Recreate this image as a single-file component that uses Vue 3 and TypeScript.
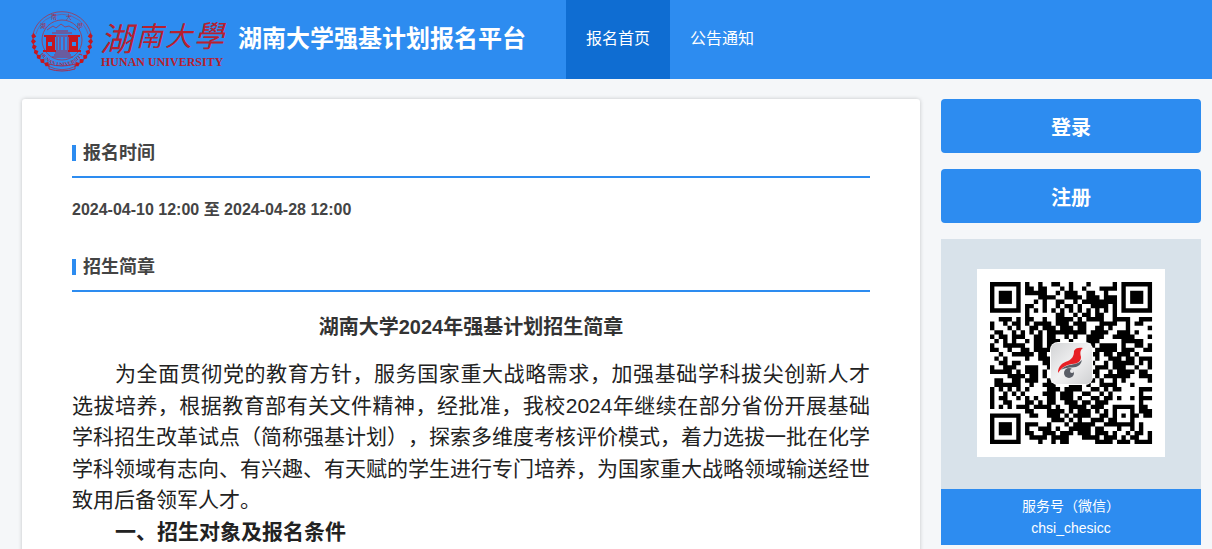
<script setup lang="ts">
interface NavItem {
  label: string
  active: boolean
}

const navItems: NavItem[] = [
  { label: '报名首页', active: true },
  { label: '公告通知', active: false },
]

// Dark modules of the code, one entry per row, as column numbers and ranges.
const qrRows: string[] = [
  '8 11 14-15 18 22 28',
  '8-9 11-12 16 18 21 25-28',
  '8-12 15 17-19 22-23 26',
  '11-14 17-20 22-24 26-28',
  '10 12 15-16 19 21-28',
  '8-9 12 15 17-18 20 23-26 28',
  '8 10 12 14 16 18 20 22 24 26 28',
  '8 15-16 19 21-22 24-25 28',
  '2-4 6 8-9 12 15-18 20 22-25 28-31 34-36',
  '0 3 5-6 8 10-13 15-17 19-21 25-28 31 33-34',
  '0 4 6 9-10 12-14 16-18 20-21 24-25 27 31 36',
  '1-2 5 7 9 11 13-21 23-26 29-31 33',
  '0 2-3 5-7 10-11 13-14 17 19 22-25 28-32 36',
  '1 3 5 8 10-11 13-15 18 22-24 30-34',
  '0 3-7 10-11 13-14 23 25-28 30 33-34 36',
  '0-1 4 7-8 10-13 24-28 30-32 35-36',
  '2 5-9 11-12 23-24 26-27 29-31 33',
  '1 3 8 11-13 24 27-29 31-32 34-36',
  '2-3 5-6 12-13 23 26 28-32 34 36',
  '0 3-5 8-10 13 24-26 28-30 33 36',
  '0-4 6 8-10 12 23-24 27 29-32 34-35',
  '4-7 9-10 12 24 26-31 34-36',
  '1-2 5-6 8-10 13 23 25 28 30 36',
  '1-6 9 12-14 18-20 22 25-28 32',
  '0 2 4 6 8 13-15 17-20 23-24 26 28-29 34-36',
  '0 3 5 7 12-14 16-18 21-22 25 27 34',
  '0 2-3 6 8 10 13-14 16-18 20 23-24 26-27 29 32 34-36',
  '0 3-4 8-9 11 13-14 17-19 21-22 24-26 34',
  '0 2 4 6-8 10-13 15 18-21 23-25 28-32 34-35',
  '8-9 13-16 18 20-22 24 26 28 32 34-36',
  '9-10 13-15 17 19-22 25-26 28 30 32-33 35-36',
  '14-16 18 20 23-25 27-28 32',
  '8-10 13 17 19-23 26-32 34',
  '8 11-13 15 18-22 24-25 29 32 34',
  '8-9 12-14 16-18 20-22 24-26 28 31 33-34 36',
  '9-12 14-17 21-24 26-28 30 32-33 36',
  '11 14 16-17 24-27 29-31 33-36',
]

const finders = [
  { x: 0, y: 0 },
  { x: 30, y: 0 },
  { x: 0, y: 30 },
]

const qrPath: string = qrRows
  .map((row, y) =>
    row
      .split(' ')
      .map((part) => {
        const [from, to = from] = part.split('-').map(Number)
        const length = to - from + 1
        return `M${from} ${y}h${length}v1h-${length}z`
      })
      .join(''),
  )
  .join('')

const leafAngles = [98, 87, 76, 65, 54, 43, 32]
</script>

<template>
  <div class="page">
    <header class="header">
      <a class="brand" href="#" aria-label="湖南大学">
        <svg class="logo" viewBox="0 0 196 64" width="196" height="64" aria-hidden="true">
          <g fill="none" stroke="#8d4770">
            <path d="M2 26a30 30 0 0 1 58 0" />
            <path d="M5 26a27 27 0 0 1 52 0" stroke-width="0.6" />
            <path d="M17 58a30 30 0 0 0 28 0" />
            <circle cx="31" cy="32" r="20" />
            <path d="M16 22l6-4 3 2 5-4 4 3 4-1 7 4" />
            <path d="M21 25h20M23 28h16M25 23h12" stroke="#a72c4e" />
            <path d="M26 29v13M29 29v13M33 29v13M37 29v13" stroke="#a72c4e" />
            <path d="M25 43h13M24 45h15M23 47h17M21 49h21" stroke="#a72c4e" />
          </g>
          <g fill="#c5161f">
            <path d="M15 28h9v15h-9zM38 28h9v15h-9z" />
            <path d="M13 27h12v2H13zM37 27h12v2H37zM12 42h13v2H12zM37 42h13v2H37z" />
            <g v-for="angle in leafAngles" :key="angle">
              <path d="M31 58l3 3-3 2-3-2z" :transform="`rotate(${-angle} 31 32)`" />
              <path d="M31 58l3 3-3 2-3-2z" :transform="`rotate(${angle} 31 32)`" />
            </g>
          </g>
          <path d="M17 34h4v4h-4zM41 34h4v4h-4z" fill="#2d8cf0" />
          <path d="M18 56q13 4 26 0v5q-13 4-26 0z" fill="none" stroke="#a72c4e" />
          <path id="seal-bottom" d="M6 33a25 25 0 0 0 50 0" fill="none" />
          <text class="seal-cn" x="9" y="20">湖</text>
          <text class="seal-cn" x="20" y="11">南</text>
          <text class="seal-cn" x="35" y="11">大</text>
          <text class="seal-cn" x="46" y="20">學</text>
          <text class="seal-en"><textPath href="#seal-bottom" startOffset="50%">HUNAN UNIVERSITY</textPath></text>
          <g class="script">
            <text x="69" y="43" font-size="33">湖</text>
            <text x="105" y="38" font-size="27">南</text>
            <text x="134" y="38" font-size="27">大</text>
            <text x="163" y="39" font-size="30">學</text>
          </g>
          <text class="logo-en" x="70" y="58">HUNAN UNIVERSITY</text>
        </svg>
      </a>
      <h1 class="site-title">湖南大学强基计划报名平台</h1>
      <nav class="nav">
        <a
          v-for="item in navItems"
          :key="item.label"
          href="#"
          class="nav-link"
          :class="{ active: item.active }"
        >{{ item.label }}</a>
      </nav>
    </header>

    <div class="content">
      <main class="card">
        <section>
          <h2 class="section-title">报名时间</h2>
          <p class="period">2024-04-10 12:00 至 2024-04-28 12:00</p>
        </section>
        <section>
          <h2 class="section-title">招生简章</h2>
          <article class="article">
            <h3 class="article-title">湖南大学2024年强基计划招生简章</h3>
            <p class="paragraph">为全面贯彻党的教育方针，服务国家重大战略需求，加强基础学科拔尖创新人才选拔培养，根据教育部有关文件精神，经批准，我校2024年继续在部分省份开展基础学科招生改革试点（简称强基计划），探索多维度考核评价模式，着力选拔一批在化学学科领域有志向、有兴趣、有天赋的学生进行专门培养，为国家重大战略领域输送经世致用后备领军人才。</p>
            <h4 class="paragraph">一、招生对象及报名条件</h4>
          </article>
        </section>
      </main>

      <aside class="sidebar">
        <button type="button" class="action">登录</button>
        <button type="button" class="action">注册</button>
        <figure class="wechat">
          <div class="qr-area">
            <svg class="qr" viewBox="0 0 188 188" width="188" height="188" role="img" aria-label="二维码">
              <defs>
                <linearGradient id="badge" x1="0" y1="0" x2="1" y2="1">
                  <stop offset="0" stop-color="#d2d3d5" />
                  <stop offset="0.5" stop-color="#f1f1f2" />
                  <stop offset="1" stop-color="#cfd0d2" />
                </linearGradient>
              </defs>
              <rect width="188" height="188" fill="#fff" />
              <g transform="translate(13 13) scale(4.38)">
                <path :d="qrPath" fill="#000" />
                <g v-for="(finder, index) in finders" :key="index" :transform="`translate(${finder.x} ${finder.y})`">
                  <path d="M0 0h7v7H0zM1 1v5h5V1z" fill="#000" fill-rule="evenodd" />
                  <rect x="2" y="2" width="3" height="3" fill="#000" />
                </g>
              </g>
              <rect x="73" y="73" width="43" height="43" rx="8" fill="#fff" />
              <rect x="74" y="74" width="41" height="41" rx="6" fill="url(#badge)" />
              <path d="M106 79c-4-1-8 0-9 3 0 5-2 8-6 10-6 2-10 5-10 12 4-6 8-8 14-9 6 0 9-3 9-7-1-4-1-7 2-9z" fill="#e71f24" />
              <path d="M84 101c4-5 9-5 14-6 3-1 5-2 7-4-1 4-3 6-6 7-5 1-10 0-15 3z" fill="#595d66" />
              <circle cx="92" cy="104" r="5" fill="#595d66" />
              <circle cx="95" cy="102" r="2" fill="#e9e9eb" />
            </svg>
          </div>
          <figcaption class="caption">
            <span>服务号（微信）</span>
            <span>chsi_chesicc</span>
          </figcaption>
        </figure>
      </aside>
    </div>
  </div>
</template>

<style>
body {
  margin: 0;
  background: #f5f7f9;
}
</style>

<style scoped>
.page {
  height: 100vh;
  overflow: hidden;
  background: #f5f7f9;
  color: #444;
  font-family: "Liberation Sans", Arial, "Noto Sans CJK SC", sans-serif;
  text-spacing-trim: space-all;
}

h1,
h2,
h3,
h4,
p,
figure {
  margin: 0;
}

.header {
  display: flex;
  height: 79px;
  padding-left: 31px;
  background: #2d8cf0;
  color: #fff;
}

.brand {
  display: flex;
  align-items: center;
  width: 207px;
}

.logo {
  display: block;
}

.script,
.logo-en {
  fill: #b8202f;
}

.script {
  font-family: "Noto Sans CJK TC", sans-serif;
  font-style: italic;
  font-weight: 400;
}

.logo-en {
  font: bold 12px "Liberation Serif", serif;
}

.seal-cn {
  fill: #a72c4e;
  font: 6px "Noto Sans CJK TC", sans-serif;
}

.seal-en {
  fill: #a72c4e;
  font: bold 5px "Liberation Serif", serif;
  text-anchor: middle;
}

.site-title {
  font-size: 24px;
  line-height: 78px;
  white-space: nowrap;
}

.nav {
  display: flex;
  margin-left: 40px;
}

.nav-link {
  padding: 0 20px;
  color: #fff;
  font-size: 16px;
  line-height: 77px;
  text-decoration: none;
  white-space: nowrap;
}

.nav-link.active {
  background: #0f6dd2;
}

.content {
  display: flex;
  align-items: flex-start;
  gap: 21px;
  padding: 20px 11px 20px 22px;
}

.card {
  flex: 1;
  min-width: 0;
  padding: 40px 50px;
  border-radius: 3px;
  background: #fff;
  box-shadow: 0 0 4px rgba(0, 0, 0, 0.2);
}

.section-title {
  display: flex;
  align-items: flex-start;
  gap: 7px;
  height: 37px;
  border-bottom: 2px solid #2d8cf0;
  font-size: 18px;
  line-height: 28px;
}

.section-title::before {
  width: 4px;
  height: 16px;
  margin-top: 6px;
  background: #2d8cf0;
  content: "";
}

.period {
  padding: 20px 0 31px;
  font-size: 16px;
  font-weight: bold;
  line-height: 24px;
}

.article {
  padding-top: 20px;
  color: #222;
}

.article-title {
  margin-bottom: 16px;
  color: #333;
  font-size: 20px;
  line-height: 30px;
  text-align: center;
}

.paragraph {
  font-size: 21px;
  line-height: 1.5;
  text-align: justify;
  text-indent: 43px;
}

.sidebar {
  display: flex;
  flex: 0 0 260px;
  flex-direction: column;
  gap: 16px;
}

.action {
  height: 54px;
  padding: 0;
  border: 0;
  border-radius: 4px;
  background: #2d8cf0;
  color: #fff;
  font: bold 20px "Liberation Sans", Arial, "Noto Sans CJK SC", sans-serif;
  cursor: pointer;
}

.qr-area {
  display: flex;
  justify-content: center;
  padding: 30px 0 32px;
  background: #d8e2ea;
}

.qr {
  display: block;
}

.caption {
  display: flex;
  flex-direction: column;
  padding: 6px 0;
  background: #2d8cf0;
  color: #fff;
  font-size: 14px;
  line-height: 22px;
  text-align: center;
}
</style>
